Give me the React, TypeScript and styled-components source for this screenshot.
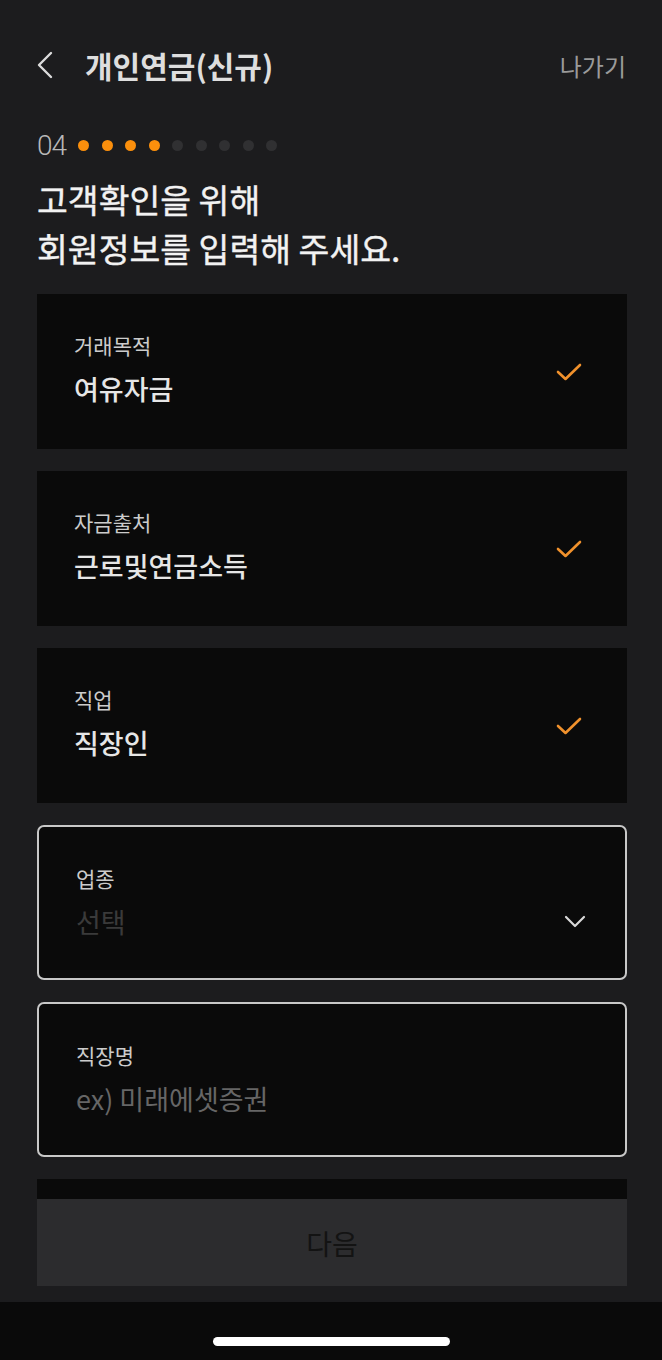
import React from "react";
import styled, { createGlobalStyle } from "styled-components";

const GlobalStyle = createGlobalStyle`
  html, body {
    margin: 0;
    padding: 0;
    background: #1c1c1e;
  }
  * {
    box-sizing: border-box;
  }
`;

const Page = styled.div`
  width: 662px;
  height: 1360px;
  display: flex;
  flex-direction: column;
  background: #1c1c1e;
  font-family: "Noto Sans CJK KR", "Noto Sans", sans-serif;
  overflow: hidden;
`;

const Scroll = styled.div`
  flex: none;
  height: 1199px;
  overflow: hidden;
  display: flex;
  flex-direction: column;

  & > * {
    flex: none;
  }
`;

const Header = styled.div`
  display: flex;
  align-items: center;
  height: 60px;
  margin-top: 35px;
  padding: 0 36px 0 37px;
`;

const BackButton = styled.div`
  width: 16px;
  height: 28px;
  display: flex;
  align-items: center;
`;

const Title = styled.h1`
  margin: 0 0 0 32px;
  flex: 1;
  font-size: 30px;
  font-weight: 700;
  color: #dedede;
`;

const Exit = styled.span`
  font-size: 24px;
  color: #9a9a9a;
`;

const Progress = styled.div`
  display: flex;
  align-items: center;
  height: 30px;
  margin: 35px 0 0 37px;
`;

const StepNo = styled.span`
  font-family: "Roboto", "Noto Sans", sans-serif;
  font-size: 28px;
  font-weight: 300;
  color: #b8b8b8;
  letter-spacing: -1px;
  margin-right: 12px;
`;

const Dots = styled.div`
  display: flex;
  gap: 12.5px;
`;

const Dot = styled.span<{ $on: boolean }>`
  width: 11px;
  height: 11px;
  border-radius: 50%;
  background: ${(p) => (p.$on ? "#fb8f0c" : "#303032")};
`;

const Heading = styled.h2`
  margin: 14px 0 0 37px;
  font-size: 33.5px;
  line-height: 49px;
  font-weight: 400;
  color: #f2f2f2;
  -webkit-text-stroke: 0.4px #f2f2f2;
`;

const Cards = styled.div`
  display: flex;
  flex-direction: column;
  gap: 22px;
  width: 590px;
  margin: 22px 0 0 37px;
`;

const Card = styled.div<{ $outlined?: boolean }>`
  flex: none;
  height: 155px;
  display: flex;
  align-items: center;
  padding: 0 45px 0 37px;
  background: #0a0a0a;
  border: ${(p) => (p.$outlined ? "2px solid #c8c8c8" : "none")};
  border-radius: ${(p) => (p.$outlined ? "7px" : "0")};
`;

const Fields = styled.div`
  flex: 1;
  align-self: flex-start;
  display: flex;
  flex-direction: column;
  padding-top: 37px;
`;

const Label = styled.div`
  font-size: 21px;
  line-height: 28px;
  color: #cccccc;
`;

const ValueRow = styled.div`
  display: flex;
  align-items: center;
  justify-content: space-between;
  margin-top: 12px;
`;

const Value = styled.div<{ $tone?: "value" | "empty" | "hint" }>`
  font-size: 27px;
  line-height: 36px;
  font-weight: ${(p) => (p.$tone === "value" ? 500 : 400)};
  color: ${(p) =>
    p.$tone === "empty" ? "#3a3a3a" : p.$tone === "hint" ? "#666666" : "#e6e6e6"};
`;

const Footer = styled.div`
  flex: none;
  height: 87px;
  width: 590px;
  margin-left: 37px;
  background: #2c2c2e;
  display: flex;
  align-items: center;
  justify-content: center;
  font-size: 28px;
  color: #131313;
`;

const Spacer = styled.div`
  flex: none;
  height: 16px;
`;

const HomeBar = styled.div`
  flex: none;
  height: 58px;
  background: #0a0a0a;
  display: flex;
  justify-content: center;
  padding-top: 35px;
`;

const Indicator = styled.div`
  width: 237px;
  height: 9px;
  border-radius: 5px;
  background: #ffffff;
`;

const Check = () => (
  <svg width="26" height="20" viewBox="0 0 26 20">
    <path d="M2 10 L9.5 17 L24 3" fill="none" stroke="#f0912c" strokeWidth="2.6" strokeLinecap="round" strokeLinejoin="round" />
  </svg>
);

const ChevronDown = () => (
  <svg width="22" height="14" viewBox="0 0 22 14" style={{ marginRight: -6 }}>
    <path d="M2 2 L11 11 L20 2" fill="none" stroke="#d8d8d8" strokeWidth="2.2" strokeLinecap="round" strokeLinejoin="round" />
  </svg>
);

const done = [
  { label: "거래목적", value: "여유자금" },
  { label: "자금출처", value: "근로및연금소득" },
  { label: "직업", value: "직장인" },
];

export default function App() {
  return (
    <Page>
      <GlobalStyle />
      <Scroll>
        <Header>
          <BackButton>
            <svg width="16" height="28" viewBox="0 0 16 28">
              <path d="M14 2 L2 14 L14 26" fill="none" stroke="#dcdcdc" strokeWidth="2.4" strokeLinecap="round" strokeLinejoin="round" />
            </svg>
          </BackButton>
          <Title>개인연금(신규)</Title>
          <Exit>나가기</Exit>
        </Header>

        <Progress>
          <StepNo>04</StepNo>
          <Dots>
            {Array.from({ length: 9 }).map((_, i) => (
              <Dot key={i} $on={i < 4} />
            ))}
          </Dots>
        </Progress>

        <Heading>
          고객확인을 위해
          <br />
          회원정보를 입력해 주세요.
        </Heading>

        <Cards>
          {done.map((d) => (
            <Card key={d.label}>
              <Fields>
                <Label>{d.label}</Label>
                <ValueRow>
                  <Value $tone="value">{d.value}</Value>
                </ValueRow>
              </Fields>
              <Check />
            </Card>
          ))}
          <Card $outlined>
            <Fields>
              <Label>업종</Label>
              <ValueRow>
                <Value $tone="empty">선택</Value>
                <ChevronDown />
              </ValueRow>
            </Fields>
          </Card>
          <Card $outlined>
            <Fields>
              <Label>직장명</Label>
              <ValueRow>
                <Value $tone="hint">ex) 미래에셋증권</Value>
              </ValueRow>
            </Fields>
          </Card>
          <Card />
        </Cards>
      </Scroll>

      <Footer>다음</Footer>
      <Spacer />
      <HomeBar>
        <Indicator />
      </HomeBar>
    </Page>
  );
}
